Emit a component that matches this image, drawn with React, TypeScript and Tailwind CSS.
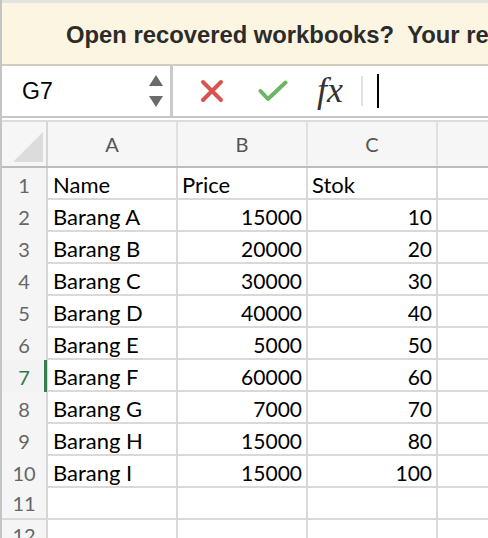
const rows: [string, string, string, string][] = [
  ["1", "Name", "Price", "Stok"],
  ["2", "Barang A", "15000", "10"],
  ["3", "Barang B", "20000", "20"],
  ["4", "Barang C", "30000", "30"],
  ["5", "Barang D", "40000", "40"],
  ["6", "Barang E", "5000", "50"],
  ["7", "Barang F", "60000", "60"],
  ["8", "Barang G", "7000", "70"],
  ["9", "Barang H", "15000", "80"],
  ["10", "Barang I", "15000", "100"],
  ["11", "", "", ""],
  ["12", "", "", ""],
];

const cellFont = { fontFamily: "Lato, 'Open Sans', sans-serif" };

function Row({ r }: { r: [string, string, string, string] }) {
  const [n, a, b, c] = r;
  const header = n === "1";
  const active = n === "7";
  return (
    <div className="grid grid-cols-[46px_130px_130px_130px_1fr] h-[32px] shrink-0 border-b-2 border-[#d9d9d9]">
      <div
        className={`relative flex items-center justify-center border-r-2 border-[#d6d6d6] text-[20px] ${
          active ? "bg-[#f3f3f3] text-[#2f7a4a]" : "bg-[#f5f5f5] text-[#666]"
        }`}
        style={cellFont}
      >
        {n}
        {active && <div className="absolute right-[-1px] top-0 bottom-[-2px] w-[3px] bg-[#3a7d52]" />}
      </div>
      <div className="flex items-center pl-[5px] border-r-2 border-[#d9d9d9] text-[22px] text-black" style={cellFont}>
        {a}
      </div>
      <div
        className={`flex items-center border-r-2 border-[#d9d9d9] text-black ${
          header ? "pl-[4px] text-[22px]" : "justify-end pr-[4px] text-[21px]"
        }`}
        style={cellFont}
      >
        {b}
      </div>
      <div
        className={`flex items-center border-r-2 border-[#d9d9d9] text-black ${
          header ? "pl-[4px] text-[22px]" : "justify-end pr-[4px] text-[21px]"
        }`}
        style={cellFont}
      >
        {c}
      </div>
      <div />
    </div>
  );
}

export default function App() {
  return (
    <div className="w-[488px] h-[538px] overflow-hidden bg-white border-l-2 border-[#c4c4c4] flex flex-col">
      {/* recovery banner */}
      <div className="h-[66px] shrink-0 bg-[#fcf5e1] border-t-[3px] border-[#e3e3e3] border-b-2 border-b-[#d3ccbc] flex items-center pl-[64px] pt-[3px] overflow-hidden">
        <span
          className="whitespace-nowrap text-[23.8px] font-bold text-[#2b2b2b]"
          style={{ fontFamily: "'Liberation Sans', Arial, sans-serif" }}
        >
          Open recovered workbooks?&nbsp;&nbsp;Your recovered files
        </span>
      </div>

      {/* formula bar */}
      <div className="h-[52px] shrink-0 flex border-b-2 border-[#c6c6c6]">
        <div className="w-[171px] shrink-0 flex items-center justify-between pl-[20px] pr-[6px] border-r-[3px] border-[#cacaca]">
          <span
            className="text-[23px] text-black"
            style={{ fontFamily: "'Liberation Sans', Arial, sans-serif" }}
          >
            G7
          </span>
          <svg width="16" height="36" viewBox="0 0 16 36">
            <path d="M8 2 L15 13 L1 13 Z" fill="#6b6b6b" />
            <path d="M1 23 L15 23 L8 34 Z" fill="#6b6b6b" />
          </svg>
        </div>
        <div className="flex-1 flex items-center">
          <svg width="24" height="24" viewBox="0 0 24 24" className="ml-[27px]">
            <path d="M3 3 L21 21 M21 3 L3 21" stroke="#d9544e" strokeWidth="4" strokeLinecap="round" />
          </svg>
          <svg width="30" height="22" viewBox="0 0 30 22" className="ml-[34px]">
            <path d="M2.5 11 L10 19 L27.5 2.5" stroke="#6db565" strokeWidth="4" strokeLinecap="round" strokeLinejoin="round" fill="none" />
          </svg>
          <span
            className="ml-[29px] text-[36px] italic text-[#333] leading-none pb-[2px]"
            style={{ fontFamily: "'Liberation Serif', 'Times New Roman', serif" }}
          >
            fx
          </span>
          <div className="ml-[18px] w-[2px] h-[30px] bg-[#e2e2e2]" />
          <div className="ml-[14px] w-[2px] h-[34px] bg-black" />
        </div>
      </div>

      {/* column header */}
      <div className="mt-[2px] h-[48px] shrink-0 grid grid-cols-[46px_130px_130px_130px_1fr] bg-[#f6f6f6] border-t-2 border-[#dcdcdc] border-b-2 border-b-[#bcbcbc]">
        <div className="border-r-2 border-[#d6d6d6] flex items-end pl-[11px] pb-[4px]">
          <svg width="30" height="30" viewBox="0 0 30 30">
            <path d="M30 0 L30 30 L0 30 Z" fill="#dcdcdc" />
          </svg>
        </div>
        {["A", "B", "C", ""].map((l, i) => (
          <div
            key={i}
            className={`flex items-center justify-center text-[20px] text-[#555] ${i < 3 ? "border-r-2 border-[#e0e0e0]" : ""}`}
            style={cellFont}
          >
            {l}
          </div>
        ))}
      </div>

      {rows.map((r) => (
        <Row key={r[0]} r={r} />
      ))}
    </div>
  );
}
